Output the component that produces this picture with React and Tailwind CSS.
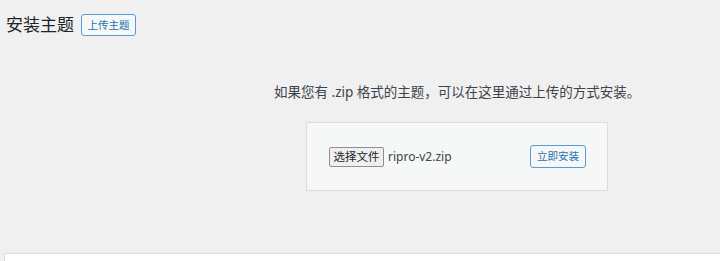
import React from "react";

export default function App() {
  const font = { fontFamily: '"Noto Sans", "Noto Sans CJK SC", sans-serif' };
  return (
    <div className="w-[720px] h-[261px] overflow-hidden bg-[#f0f0f1] text-[#3c434a]" style={font}>
      <div className="flex items-center pl-[6px] pt-[9px] h-[31px] box-content">
        <h1 className="text-[17px] leading-[22px] text-[#1d2327] font-normal">安装主题</h1>
        <button className="ml-[7px] h-[22px] w-[55px] border border-[#5b9bd5] rounded-[3px] bg-[#f6f7f7] text-[#2271b1] text-[10.5px] leading-[20px] flex items-center justify-center">
          上传主题
        </button>
      </div>
      <p className="mt-[42px] pl-[274px] text-[13.5px] leading-[20px] text-[#3c434a] whitespace-nowrap">
        如果您有 .zip 格式的主题，可以在这里通过上传的方式安装。
      </p>
      <div className="mt-[20px] ml-[306px] w-[302px] h-[69px] border border-[#dcdcde] bg-[#f6f7f7] flex items-center pl-[22px] pr-[21px]">
        <button className="h-[20px] w-[55px] border border-[#8c8f94] rounded-[2px] bg-[#efefef] text-[#1d2327] text-[11.5px] leading-[18px] flex items-center justify-center">
          选择文件
        </button>
        <span className="ml-[4px] text-[12px] text-[#3c434a]">ripro-v2.zip</span>
        <button className="ml-auto h-[23px] w-[56px] border border-[#5b9bd5] rounded-[3px] bg-[#f6f7f7] text-[#2271b1] text-[10.5px] flex items-center justify-center">
          立即安装
        </button>
      </div>
      <div className="mt-[62px] ml-[4px] h-[20px] border-t border-l border-[#dcdcde] bg-white" />
    </div>
  );
}
